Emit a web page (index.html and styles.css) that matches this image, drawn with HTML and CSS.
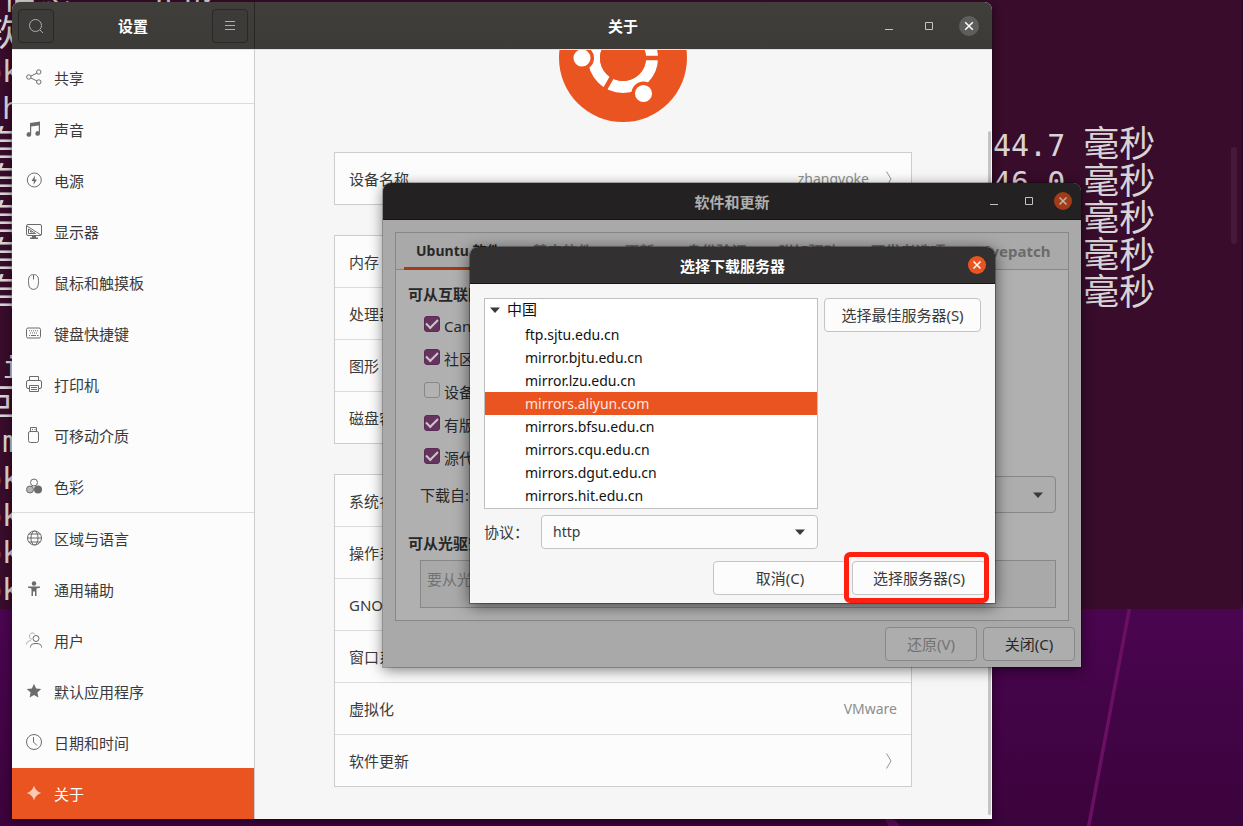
FILE: index.html
```html
<!DOCTYPE html>
<html lang="zh-CN">
<head>
<meta charset="utf-8">
<title>软件和更新</title>
<link rel="stylesheet" href="styles.css">
</head>
<body>
<main class="desktop">
  <svg class="wallpaper" viewBox="0 0 1243 826" preserveAspectRatio="none" aria-hidden="true">
    <path d="M1131 600L1088 830" stroke="#6a1063" stroke-width="3.5"/>
    <path d="M884 818h9l9 10h-12z" fill="#5c0c57"/>
  </svg>

  <section class="terminal" aria-label="终端">
    <div class="line"><span><b>态信息</b>... <b>完成</b></span></div>
    <div class="line"><span>&nbsp;<b>软件</b></span></div>
    <div class="line"><span>&nbsp;oke</span></div>
    <div class="line"><span>&nbsp;.ht</span></div>
    <div class="line"><span>&nbsp;<b>自</b></span><span>44.7 <b>毫秒</b></span></div>
    <div class="line"><span>&nbsp;<b>自</b></span><span>46.0 <b>毫秒</b></span></div>
    <div class="line"><span>&nbsp;<b>自</b></span><span>45.1 <b>毫秒</b></span></div>
    <div class="line"><span>&nbsp;<b>自</b></span><span>45.3 <b>毫秒</b></span></div>
    <div class="line"><span>&nbsp;<b>自</b></span><span>44.9 <b>毫秒</b></span></div>
    <div class="line"></div>
    <div class="line"><span>&nbsp;<i>n</i>it</span></div>
    <div class="line"><span>&nbsp;<b>回</b></span></div>
    <div class="line"><span>&nbsp;<i>'</i>m</span></div>
    <div class="line"><span>&nbsp;oke</span></div>
    <div class="line"><span>&nbsp;oke</span></div>
    <div class="line"><span>&nbsp;oke</span></div>
    <div class="line"><span>&nbsp;oke</span></div>
    <div class="term-scroll"></div>
  </section>

  <section class="window settings" aria-label="设置">
    <header class="settings-head">
      <div class="head-left">
        <button class="tool" aria-label="搜索"><svg width="16" height="16" viewBox="0 0 16 16"><circle cx="7.5" cy="7.5" r="6" /><path d="M12 12l3 3"/></svg></button>
        <h1>设置</h1>
        <button class="tool" aria-label="菜单"><svg width="16" height="16" viewBox="0 0 16 16"><path d="M3 3.500h10M3 7.500h10M3 11.500h10"/></svg></button>
      </div>
      <div class="head-right">
        <h1>关于</h1>
        <div class="controls">
          <button class="wbtn" aria-label="最小化"><svg width="10" height="10" viewBox="0 0 10 10"><path d="M1 8.500h8"/></svg></button>
          <button class="wbtn" aria-label="最大化"><svg width="10" height="10" viewBox="0 0 10 10"><path d="M1.500 1.500h7v7h-7z"/></svg></button>
          <button class="wbtn round grey" aria-label="关闭"><svg width="10" height="10" viewBox="0 0 10 10"><path d="M1.200 1.200l7.600 7.600M8.800 1.200l-7.600 7.600"/></svg></button>
        </div>
      </div>
    </header>
    <div class="settings-body">
      <nav class="sidebar">
        <a class="item last" href="#"><svg viewBox="0 0 16 16"><g class="s"><circle cx="2.800" cy="8" r="2.200"/><circle cx="12.800" cy="3" r="2.200"/><circle cx="12.800" cy="13" r="2.200"/><path d="M5 7l6-3M5 9l6 3"/></g></svg>共享</a>
        <a class="item" href="#"><svg viewBox="0 0 16 16"><path class="f" d="M4 2l10-1.500v12a2.300 2.300 0 1 1-1.200-2V4.500L5.200 5.600V13.500a2.300 2.300 0 1 1-1.200-2z"/></svg>声音</a>
        <a class="item" href="#"><svg viewBox="0 0 16 16"><circle class="s" cx="8.300" cy="8" r="7"/><path class="f" d="M9 3.500L5.500 9h2.300L7.500 12.800 11 7.500H8.700z"/></svg>电源</a>
        <a class="item" href="#"><svg viewBox="0 0 16 16"><path class="s" d="M2 1.500h12q1.500 0 1.500 1.500v8q0 1.500-1.500 1.500H2Q.500 12.500.500 11V3Q.500 1.500 2 1.500zM1 3l14 9M2.500 6v4.500h7zM4.500 8v1h2"/><path class="f" d="M6 13h4v1.500h2V16H4v-1.500h2z"/></svg>显示器</a>
        <a class="item" href="#"><svg viewBox="0 0 16 16"><path class="s" d="M7.500.600C4 .600 2.600 2.500 2.500 6.500 2.400 12 3.500 15.300 7.500 15.300S12.600 12 12.500 6.500C12.400 2.500 11 .600 7.500.600zM7.500 1v4.500"/></svg>鼠标和触摸板</a>
        <a class="item" href="#"><svg viewBox="0 0 16 16"><rect class="s" x=".500" y="3" width="14" height="10" rx="1.500"/><path class="s" stroke-dasharray="1 1" d="M3 5.800h9.500M4 8h8"/><path class="s" d="M3 10.500h1M5 10.500h5M11 10.500h1.500"/></svg>键盘快捷键</a>
        <a class="item" href="#"><svg viewBox="0 0 16 16"><path class="s" d="M3.500 4.500v-4h9v4M3 12.500H2Q.500 12.500.500 11V6Q.500 4.500 2 4.500h12q1.500 0 1.500 1.500v5q0 1.500-1.500 1.500h-1M3.500 9.500h9v6h-9zM5 11.500h6M5 13.500h6"/></svg>打印机</a>
        <a class="item" href="#"><svg viewBox="0 0 16 16"><path class="s" d="M4.500 4.500v-4h6v4M4 4.500h7q1.500 0 1.500 1.500v7.500q0 2-2 2h-6q-2 0-2-2V6q0-1.500 1.500-1.500zM6 2.500h1M8.500 2.500h1"/></svg>可移动介质</a>
        <a class="item last" href="#"><svg viewBox="0 0 16 16"><circle class="s" cx="8" cy="4.500" r="3.500"/><circle cx="4" cy="11.500" r="3.500" fill="#b5b5b5" stroke="#6b6b6b"/><circle class="f" cx="12" cy="11.500" r="4"/></svg>色彩</a>
        <a class="item" href="#"><svg viewBox="0 0 16 16"><g class="s"><circle cx="8.500" cy="8" r="7"/><ellipse cx="8.500" cy="8" rx="3.500" ry="7"/><path d="M2.800 4h11.400M1.500 8h14M2.800 12h11.400"/></g></svg>区域与语言</a>
        <a class="item" href="#"><svg viewBox="0 0 16 16"><circle class="f" cx="8" cy="2.500" r="2.200"/><path class="f" d="M2 5.500h12v1.300l-3.500.700V15H9v-4.500H7V15H5.500V7.500L2 6.800z"/></svg>通用辅助</a>
        <a class="item" href="#"><svg viewBox="0 0 16 16"><g class="s"><path opacity=".500" d="M6 7.500A3 3.300 0 1 1 9 2.500M.500 12.500Q.500 9 5 8.500"/><circle cx="10" cy="6.500" r="3"/><path d="M4.500 15.500v-1Q5 11.500 10 11.500t5.500 3v1"/></g></svg>用户</a>
        <a class="item" href="#"><svg viewBox="0 0 16 16"><path class="f" d="M8 .800l2.100 4.700 5.100.600-3.800 3.500 1 5-4.400-2.500-4.400 2.500 1-5L.800 6.100l5.100-.600z"/></svg>默认应用程序</a>
        <a class="item" href="#"><svg viewBox="0 0 16 16"><g class="s"><circle cx="8" cy="8" r="7.500"/><path d="M7.500 3v5l3.500 3.500"/></g></svg>日期和时间</a>
        <a class="item active" href="#" aria-current="page"><svg viewBox="0 0 16 16"><path class="f" d="M8 .500Q9.500 6.500 15.300 8 9.500 9.500 8 15.500 6.500 9.500.700 8 6.500 6.500 8 .500z"/></svg>关于</a>
      </nav>
      <div class="about">
        <div class="logo">
          <svg width="128" height="128" viewBox="-64 -64 128 128" role="img" aria-label="Ubuntu">
            <circle r="64" fill="#e95420"/>
            <circle r="29" fill="none" stroke="#fff" stroke-width="12"/>
            <path d="M0 0h40M0 0L-20 34.600M0 0L-20-34.600" stroke="#e95420" stroke-width="4.500"/>
            <circle r="23" fill="#e95420"/>
            <g fill="#fff" stroke="#e95420" stroke-width="3.500"><circle cx="-41" r="10.300"/><circle cx="20.500" cy="35.500" r="10.300"/><circle cx="20.500" cy="-35.500" r="10.300"/></g>
          </svg>
        </div>
        <div class="card">
          <div class="row"><span>设备名称</span><span class="val">zhangyoke<svg class="chev" viewBox="0 0 8 16"><path d="M1.500 .500l4.500 7.500-4.500 7.500"/></svg></span></div>
        </div>
        <div class="card">
          <div class="row">内存</div>
          <div class="row">处理器</div>
          <div class="row">图形</div>
          <div class="row">磁盘容量</div>
        </div>
        <div class="card">
          <div class="row">系统名称</div>
          <div class="row">操作系统类型</div>
          <div class="row">GNOME 版本</div>
          <div class="row">窗口系统</div>
          <div class="row"><span>虚拟化</span><span class="val">VMware</span></div>
          <div class="row"><span>软件更新</span><span class="val"><svg class="chev" viewBox="0 0 8 16"><path d="M1.500 .500l4.500 7.500-4.500 7.500"/></svg></span></div>
        </div>
        <div class="scroll"></div>
      </div>
    </div>
  </section>

  <section class="window sources" aria-label="软件和更新">
    <header class="bar">
      <h2>软件和更新</h2>
      <div class="controls">
        <button class="wbtn" aria-label="最小化"><svg width="10" height="10" viewBox="0 0 10 10"><path d="M1 8.500h8"/></svg></button>
        <button class="wbtn" aria-label="最大化"><svg width="10" height="10" viewBox="0 0 10 10"><path d="M1.500 1.500h7v7h-7z"/></svg></button>
        <button class="wbtn round" aria-label="关闭"><svg width="10" height="10" viewBox="0 0 10 10"><path d="M1.500 1.500l7 7M8.500 1.500l-7 7"/></svg></button>
      </div>
    </header>
    <div class="sources-body">
      <div class="notebook">
        <div class="tabs" role="tablist">
          <button class="tab on" role="tab" aria-selected="true">Ubuntu 软件</button>
          <button class="tab" role="tab">其它软件</button>
          <button class="tab" role="tab">更新</button>
          <button class="tab" role="tab">身份验证</button>
          <button class="tab" role="tab">附加驱动</button>
          <button class="tab" role="tab">开发者选项</button>
          <button class="tab" role="tab">Livepatch</button>
        </div>
        <div class="page">
          <h3>可从互联网下载</h3>
          <div class="checks">
            <label><input type="checkbox" checked>Canonical 支持的免费和开源软件 (main)</label>
            <label><input type="checkbox" checked>社区维护的免费和开源软件 (universe)</label>
            <label><input type="checkbox">设备的专有驱动 (restricted)</label>
            <label><input type="checkbox" checked>有版权和合法性问题的软件 (multiverse)</label>
            <label><input type="checkbox" checked>源代码</label>
          </div>
          <div class="from">
            <label for="from">下载自:</label>
            <div class="select"><select id="from"><option>位于中国的服务器</option></select><svg class="tri" viewBox="0 0 10 6"><path d="M0 .500h10L5 6z"/></svg></div>
          </div>
          <h3>可从光驱安装</h3>
          <div class="cd">要从光盘安装</div>
        </div>
      </div>
      <footer class="foot">
        <button class="btn dim" disabled>还原(V)</button>
        <button class="btn">关闭(C)</button>
      </footer>
    </div>
  </section>

  <section class="window dialog" role="dialog" aria-label="选择下载服务器">
    <header class="bar">
      <h2>选择下载服务器</h2>
      <div class="controls">
        <button class="wbtn round" aria-label="关闭"><svg width="10" height="10" viewBox="0 0 10 10"><path d="M1.500 1.500l7 7M8.500 1.500l-7 7"/></svg></button>
      </div>
    </header>
    <div class="dialog-body">
      <div class="pick">
        <ul class="tree" role="tree">
          <li class="parent" role="treeitem"><svg class="tri" viewBox="0 0 10 6"><path d="M0 .500h10L5 6z"/></svg>中国</li>
          <li role="treeitem">ftp.sjtu.edu.cn</li>
          <li role="treeitem">mirror.bjtu.edu.cn</li>
          <li role="treeitem">mirror.lzu.edu.cn</li>
          <li class="sel" role="treeitem" aria-selected="true">mirrors.aliyun.com</li>
          <li role="treeitem">mirrors.bfsu.edu.cn</li>
          <li role="treeitem">mirrors.cqu.edu.cn</li>
          <li role="treeitem">mirrors.dgut.edu.cn</li>
          <li role="treeitem">mirrors.hit.edu.cn</li>
        </ul>
        <button class="btn best">选择最佳服务器(S)</button>
        <div class="proto">
          <label for="proto">协议：</label>
          <div class="select"><select id="proto"><option>http</option></select><svg class="tri" viewBox="0 0 10 6"><path d="M0 .500h10L5 6z"/></svg></div>
        </div>
      </div>
      <footer class="actions">
        <button class="btn">取消(C)</button>
        <div class="marked"><button class="btn">选择服务器(S)</button></div>
      </footer>
    </div>
  </section>
</main>
</body>
</html>
```
FILE: styles.css
```css
* { box-sizing: border-box; }
body {
  margin: 0;
  font: 15px/24px "Noto Sans", "Noto Sans CJK SC", sans-serif;
  color: #3a3a3a;
}
button, select { font: inherit; color: inherit; margin: 0; }
h1, h2, h3, ul { margin: 0; padding: 0; font-size: 15px; }
a { color: inherit; text-decoration: none; }
svg { flex: none; display: block; }

.desktop {
  position: relative;
  min-height: 100vh;
  overflow: hidden;
  background: linear-gradient(#2c0a2a 0, #2c0a2a 600px, #4a0550 610px, #3b033c 100%);
}
.wallpaper { position: absolute; inset: 0; width: 100%; height: 100%; }

/* terminal */
.terminal {
  position: absolute;
  top: -21px;
  left: -34px;
  right: 2px;
  height: 630px;
  background: #380c2a;
  color: #d8d4d6;
  font: 30px/37px "DejaVu Sans Mono", "Noto Sans CJK SC", monospace;
}
.line { display: grid; grid-template-columns: 1027px 1fr; height: 37px; white-space: pre; }
.line b { font: 36px/29px "Noto Sans CJK SC", sans-serif; vertical-align: top; }
.line i { font-style: normal; color: #c4743c; }
.term-scroll {
  position: absolute;
  top: 168px;
  right: 4px;
  width: 6px;
  height: 97px;
  border-radius: 3px;
  background: #451a38;
}

/* windows */
.window { position: absolute; overflow: hidden; border-radius: 8px 8px 0 0; }
.controls { display: flex; align-items: center; }
.wbtn {
  display: grid;
  place-items: center;
  width: 20px;
  height: 20px;
  padding: 0;
  border: 0;
  background: none;
}
.wbtn path { fill: none; stroke: #c4c2bf; }
.round { width: 18px; height: 18px; border-radius: 50%; background: #e95420; }
.round path { stroke: #fff; stroke-width: 1.5; }
.grey { width: 20px; height: 20px; background: #5e5e5d; }

/* settings */
.settings {
  top: 2px;
  left: 12px;
  right: 251px;
  background: #f6f6f6;
  box-shadow: 0 2px 8px rgba(0, 0, 0, .5);
}
.settings-head {
  display: grid;
  grid-template-columns: 243px 1fr;
  height: 47px;
  color: #fff;
  background: linear-gradient(#403e3b, #3c3b38);
}
.head-left {
  display: flex;
  align-items: center;
  justify-content: space-between;
  padding: 0 6px;
  border-right: 1px solid #282725;
}
.tool {
  display: grid;
  place-items: center;
  width: 36px;
  height: 34px;
  padding: 0;
  border: 1px solid #2a2927;
  border-radius: 4px;
  background: #3d3b39;
}
.tool svg { fill: none; stroke: #b0aeab; }
.head-right {
  display: grid;
  grid-template-columns: 1fr auto 1fr;
  align-items: center;
  padding-right: 13px;
}
.head-right h1 { grid-column: 2; padding-left: 12px; }
.head-right .controls { justify-self: end; gap: 20px; }
.settings-body { display: grid; grid-template-columns: 243px 1fr; border-top: 1px solid #e2e2e2; }
.sidebar { padding-top: 2px; background: #fcfcfc; border-right: 1px solid #cdcdcd; }
.item { display: flex; align-items: center; gap: 12px; height: 51px; padding: 0 14px; }
.item svg { width: 16px; height: 16px; margin-bottom: 2px; }
.item.last { height: 52px; border-bottom: 1px solid #dcdcdc; }
.item .s { fill: none; stroke: #6b6b6b; }
.item .f { fill: #6b6b6b; }
.item.active { color: #fff; background: #e95420; }
.item.active .f { fill: #fbc9b6; }

.about {
  position: relative;
  display: flex;
  flex-direction: column;
  align-items: center;
  gap: 30px;
  padding-right: 1px;
}
.logo { display: flex; align-items: flex-end; height: 72px; overflow: hidden; }
.card { width: 578px; border: 1px solid #cdcdcd; background: #fcfcfc; }
.row {
  display: flex;
  align-items: center;
  justify-content: space-between;
  height: 51px;
  padding: 0 14px;
}
.row + .row { height: 52px; border-top: 1px solid #dcdcdc; }
.val { display: flex; align-items: center; gap: 16px; font-size: 14px; color: #8b8e8f; }
.chev { width: 8px; height: 16px; margin-right: 4px; fill: none; stroke: #929595; }
.scroll {
  position: absolute;
  top: 81px;
  right: 1px;
  bottom: 4px;
  width: 3px;
  border-radius: 2px;
  background: #c4c4c4;
}

/* shared dialog parts */
.bar {
  display: grid;
  grid-template-columns: 1fr auto 1fr;
  align-items: center;
  height: 37px;
  padding: 0 9px;
  border-bottom: 1px solid #161415;
}
.bar h2 { grid-column: 2; padding-top: 2px; }
.bar .controls { justify-self: end; gap: 15px; }
.btn {
  height: 34px;
  padding: 0 16px;
  border: 1px solid #c4c4c4;
  border-radius: 4px;
  background: #fcfcfc;
}
.select { position: relative; flex: 1; }
.select select {
  display: block;
  width: 100%;
  height: 34px;
  padding: 0 11px;
  appearance: none;
  border: 1px solid #c4c4c4;
  border-radius: 4px;
  background: #fcfcfc;
  font-size: 14px;
}
.tri { width: 10px; height: 6px; fill: #3a3a3a; }
.select .tri { position: absolute; right: 13px; top: calc(50% - 3px); }

/* software & updates */
.sources {
  top: 183px;
  left: 383px;
  width: 698px;
  background: #a9a9a9;
  color: #282828;
  box-shadow: 0 3px 14px rgba(0, 0, 0, .5), 0 0 0 1px rgba(0, 0, 0, .25);
}
.sources .bar { background: #232122; color: #b0aeab; }
.sources .bar .round { background: #a23b17; }
.sources .round path { stroke: #c4b4ac; }
.sources-body { padding: 12px 6px 6px 12px; }
.notebook { margin-right: 6px; border: 1px solid #878787; background: #b0b0b0; }
.tabs {
  display: flex;
  gap: 8px;
  height: 37px;
  padding: 0 8px;
  background: #a9a9a9;
  border-bottom: 1px solid #878787;
}
.tab {
  flex: none;
  height: 37px;
  padding: 2px 12px 0;
  border: 0;
  border-bottom: 3px solid transparent;
  background: none;
  color: #6b6b6b;
  font-weight: 700;
}
.tab.on { color: #282828; border-color: #a23b17; font-size: 14px; }
.page { padding: 12px; }
.checks { display: grid; gap: 9px; padding: 8px 0 6px 16px; }
.checks label { display: flex; align-items: center; gap: 4px; }
.checks input {
  appearance: none;
  display: grid;
  place-items: center;
  width: 16px;
  height: 16px;
  margin: 0 0 4px;
  border: 1px solid #878787;
  border-radius: 3px;
  background: #b2b2b2;
}
.checks input:checked { background: #66335f; border-color: #5c2b55; }
.checks input:checked::after {
  content: "";
  width: 10px;
  height: 5px;
  margin-bottom: 3px;
  border: solid #c8c8c8;
  border-width: 0 0 2px 2px;
  transform: rotate(-45deg);
}
.from { display: flex; align-items: center; gap: 12px; padding-left: 12px; margin-bottom: 18px; }
.from .select select { height: 37px; background: #adadad; border-color: #878787; }
.cd {
  height: 48px;
  margin: 5px 0 0 12px;
  padding: 6px;
  border: 1px solid #878787;
  background: #a9a9a9;
  color: #737373;
}
.foot { display: flex; justify-content: flex-end; gap: 6px; margin-top: 6px; }
.foot .btn { width: 92px; background: #adadad; border-color: #878787; }
.foot .dim { color: #737373; }

/* server chooser */
.dialog {
  top: 247px;
  left: 470px;
  width: 525px;
  overflow: visible;
  background: #f6f6f6;
  box-shadow: 0 3px 16px rgba(0, 0, 0, .6), 0 0 0 1px rgba(0, 0, 0, .3);
}
.dialog .bar { background: #323031; color: #fff; border-radius: 8px 8px 0 0; }
.dialog-body { padding: 14px 9px 8px 14px; }
.pick {
  display: grid;
  grid-template-columns: 1fr 157px;
  gap: 6px;
  align-items: start;
  margin-right: 5px;
}
.tree {
  list-style: none;
  padding: 1px 0;
  border: 1px solid #c0c0c0;
  background: #fff;
  color: #111;
  font-size: 14px;
  line-height: 23px;
}
.tree li { height: 23px; padding-left: 40px; }
.tree .parent {
  display: flex;
  align-items: center;
  gap: 7px;
  padding: 0 0 4px 5px;
  font-size: 15px;
}
.tree .sel { color: #fde8e0; background: #e95420; }
.proto { display: flex; align-items: center; gap: 12px; }
.proto label { width: 45px; }
.actions { display: flex; justify-content: flex-end; gap: 5px; margin-top: 12px; }
.actions .btn { width: 134px; }
.marked { position: relative; }
.marked::after {
  content: "";
  position: absolute;
  inset: -9px -3px -8px -8px;
  border: 5px solid #ff2011;
  border-radius: 6px;
  pointer-events: none;
}
```
